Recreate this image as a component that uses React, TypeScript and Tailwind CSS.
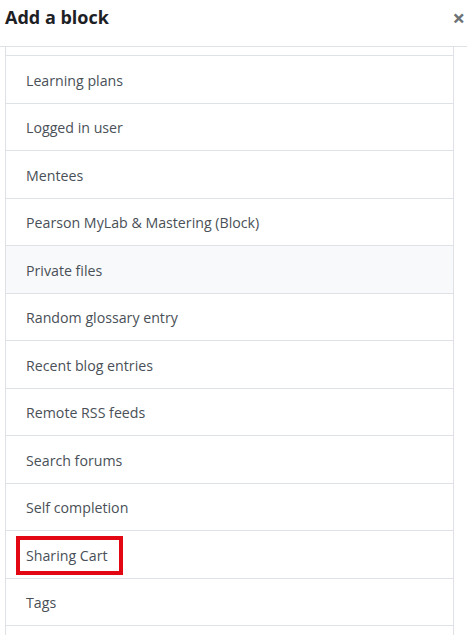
const items = [
  "Learning plans",
  "Logged in user",
  "Mentees",
  "Pearson MyLab & Mastering (Block)",
  "Private files",
  "Random glossary entry",
  "Recent blog entries",
  "Remote RSS feeds",
  "Search forums",
  "Self completion",
  "Sharing Cart",
  "Tags",
];

function App() {
  return (
    <div
      className="w-[467px] h-[635px] overflow-hidden bg-white"
      style={{ fontFamily: '"Open Sans", "Noto Sans", sans-serif' }}
    >
      <div className="flex justify-between items-start h-[47px] border-b border-[#dee2e6]">
        <h5 className="pl-[5px] pt-[5px] text-[18px] font-bold leading-[24px] text-[#1d2125]">
          Add a block
        </h5>
        <button className="pr-[2px] pt-[5px] text-[22px] font-bold leading-[24px] text-[#6c7176]">
          ×
        </button>
      </div>
      <div className="ml-[5px] w-[449px] border-x border-[#dee2e6]">
        <div className="h-[9px] border-b border-[#dee2e6]" />
        {items.map((item) => (
          <div
            key={item}
            className={
              "relative px-5 pt-[13.5px] pb-[10.5px] text-[14.2px] leading-[22.5px] text-[#495057] border-b border-[#dee2e6] " +
              (item === "Private files" ? "bg-[#f8f9fa]" : "bg-white")
            }
          >
            {item}
            {item === "Sharing Cart" && (
              <div className="absolute left-[10px] top-[5px] w-[107px] h-[39px] border-4 border-[#e30613]" />
            )}
          </div>
        ))}
        <div className="h-[20px]" />
      </div>
    </div>
  );
}

export default App;
